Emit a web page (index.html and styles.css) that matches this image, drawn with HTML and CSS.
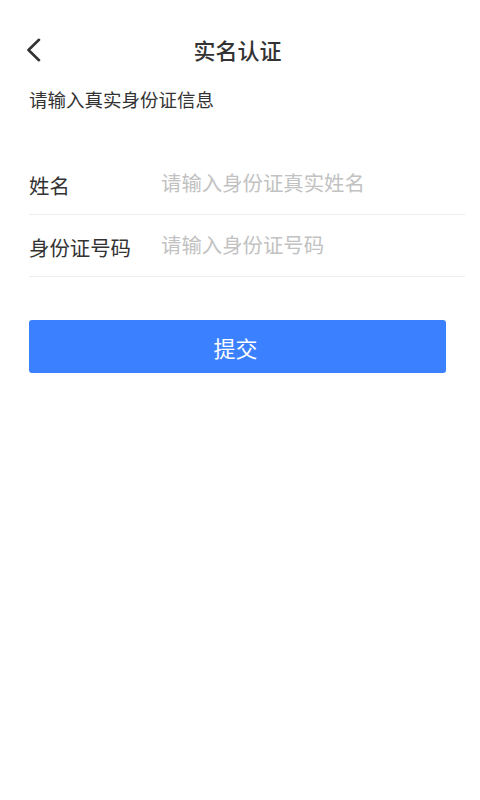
FILE: index.html
```html
<!DOCTYPE html>
<html lang="zh-CN">
<head>
<meta charset="utf-8">
<meta name="viewport" content="width=device-width, initial-scale=1">
<title>实名认证</title>
<link rel="stylesheet" href="styles.css">
</head>
<body>
<div class="page">
  <header class="nav">
    <button class="back" type="button" aria-label="返回">
      <svg width="16" height="24" viewBox="0 0 16 24"><polyline points="13,1.8 2.5,12 13,22.2" fill="none" stroke="#333" stroke-width="2.6" stroke-linecap="round" stroke-linejoin="round"/></svg>
    </button>
    <h1 class="title">实名认证</h1>
  </header>
  <p class="hint">请输入真实身份证信息</p>
  <form class="form">
    <div class="row">
      <label class="label" for="name">姓名</label>
      <input class="field" id="name" type="text" placeholder="请输入身份证真实姓名">
    </div>
    <div class="row">
      <label class="label" for="idno">身份证号码</label>
      <input class="field" id="idno" type="text" placeholder="请输入身份证号码">
    </div>
    <button class="submit" type="button">提交</button>
  </form>
</div>
</body>
</html>
```
FILE: styles.css
```css
* { box-sizing: border-box; }
html, body {
  margin: 0;
  padding: 0;
  background: #fff;
}
body {
  font-family: "Noto Sans CJK SC", "Noto Sans", sans-serif;
  color: #333;
}
.page {
  width: 480px;
  min-height: 800px;
}
.nav {
  display: flex;
  align-items: center;
  height: 51px;
  margin-top: 24px;
  padding: 0 47px 0 26px;
}
.back {
  width: 16px;
  height: 24px;
  padding: 0;
  border: 0;
  background: none;
  display: flex;
}
.title {
  flex: 1;
  margin: 0;
  text-align: center;
  font-size: 22px;
  font-weight: 500;
  line-height: 50px;
  padding-bottom: 1px;
  color: #333;
}
.hint {
  margin: 12px 0 0 29px;
  font-size: 18.5px;
  line-height: 25px;
  color: #333;
}
.form {
  margin: 41px 15px 0 29px;
}
.row {
  display: flex;
  align-items: center;
  height: 62px;
  border-bottom: 1px solid #eeeeee;
}
.label {
  width: 132px;
  flex: none;
  font-size: 20.4px;
  line-height: 28px;
  color: #333;
  padding-top: 2px;
}
.field {
  flex: 1;
  min-width: 0;
  border: 0;
  outline: none;
  padding: 0 0 4px 0;
  margin: 0;
  font: inherit;
  font-size: 20.4px;
  line-height: 28px;
  color: #333;
  background: transparent;
}
.field::placeholder {
  color: #c2c2c2;
}
.submit {
  display: block;
  width: 417px;
  height: 53px;
  margin-top: 43px;
  border: 0;
  border-radius: 3px;
  background: #3b80fe;
  color: #fff;
  font: inherit;
  font-size: 22px;
  padding: 0 4px 0 0;
}
```
